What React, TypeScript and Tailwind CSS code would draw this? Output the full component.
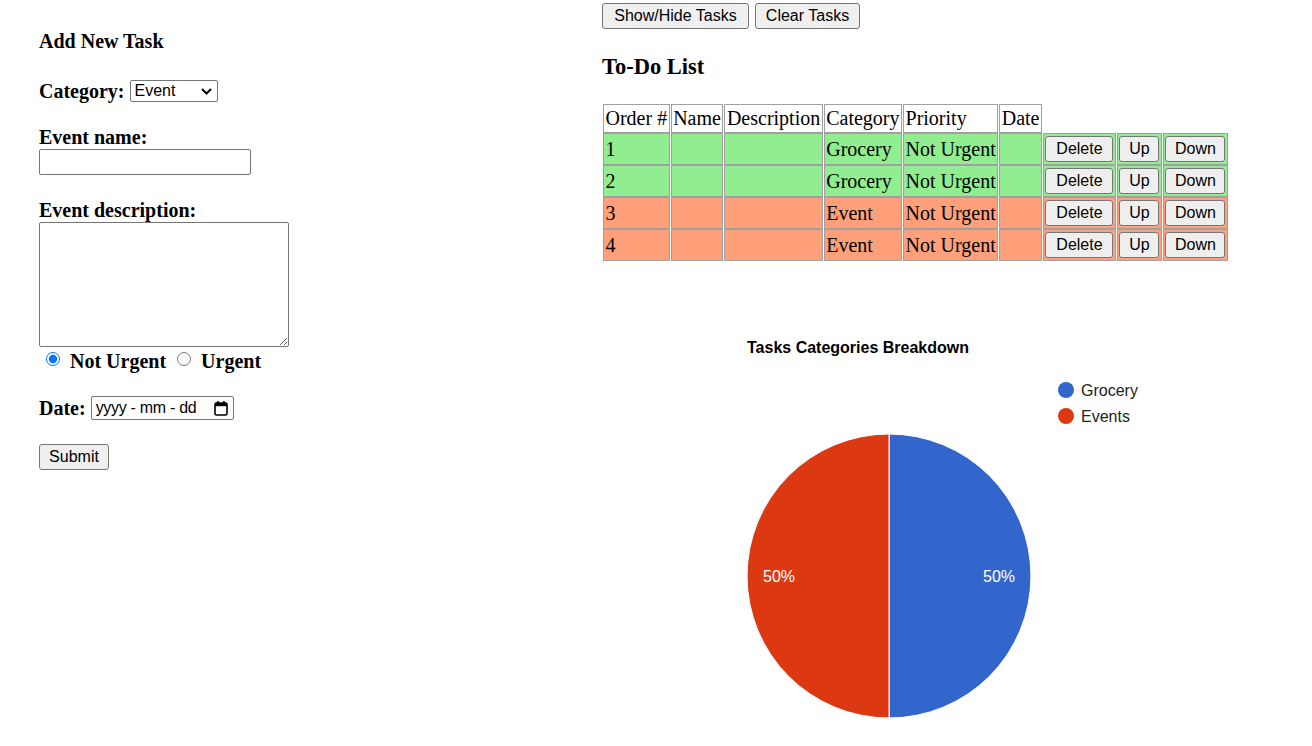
import React from 'react';

type Task = { id: number; category: 'Grocery' | 'Event'; priority: string };

const tasks: Task[] = [
  { id: 1, category: 'Grocery', priority: 'Not Urgent' },
  { id: 2, category: 'Grocery', priority: 'Not Urgent' },
  { id: 3, category: 'Event', priority: 'Not Urgent' },
  { id: 4, category: 'Event', priority: 'Not Urgent' },
];

const btn =
  "h-[26px] bg-[#efefef] border border-[#767676] rounded-[3px] text-[16px] leading-[18px] text-black font-['Liberation_Sans',Arial,sans-serif] text-center";

const cell = 'border border-[#a0a0a0] px-[1.5px] py-[2px] leading-[23px] align-middle';

const TaskForm: React.FC = () => (
  <div className="w-[602px] shrink-0 pl-[39px] pt-[30px]">
    <h4 className="font-bold leading-[23px]">Add New Task</h4>

    <div className="mt-[26px] flex items-center h-[24px] font-bold">
      <span>Category:</span>
      <span className="relative ml-[5px] inline-flex">
        <select
          defaultValue="Event"
          className="appearance-none w-[88px] h-[22px] border border-[#767676] rounded-[2px] pl-[4px] text-[16px] leading-[20px] font-normal font-['Liberation_Sans',Arial,sans-serif] bg-white"
        >
          <option>Grocery</option>
          <option>Event</option>
        </select>
        <svg className="absolute right-[6px] top-[8px] pointer-events-none" width="11" height="7" viewBox="0 0 11 7">
          <path d="M1 1l4.5 4.5L10 1" fill="none" stroke="#000" strokeWidth="2" />
        </svg>
      </span>
    </div>

    <div className="mt-[23px]">
      <div className="font-bold leading-[23px]">Event name:</div>
      <input type="text" className="block w-[212px] h-[26px] border border-[#767676] rounded-[2px] bg-white" />
    </div>

    <div className="mt-[24px]">
      <div className="font-bold leading-[23px]">Event description:</div>
      <textarea className="block w-[250px] h-[125px] border border-[#767676] rounded-[2px] bg-white" style={{ resize: 'both' }} />
    </div>

    <div className="mt-[2px] flex items-center h-[23px] font-bold">
      <input type="radio" name="priority" defaultChecked className="ml-[7px] mr-[10px] mb-[4px] w-[14px] h-[14px]" />
      <span>Not Urgent</span>
      <input type="radio" name="priority" className="ml-[11px] mr-[10px] mb-[4px] w-[14px] h-[14px]" />
      <span>Urgent</span>
    </div>

    <div className="mt-[24px] flex items-center h-[24px] font-bold">
      <span>Date:</span>
      <span className="ml-[5px] flex items-center w-[143px] h-[24px] border border-[#767676] rounded-[2px] pl-[4px] pr-[4px] font-normal text-[16px] font-['Liberation_Sans',Arial,sans-serif]">
        <span className="flex-1 tracking-[-0.3px]">yyyy - mm - dd</span>
        <svg width="14" height="16" viewBox="0 0 14 16" className="mr-[1px]">
          <rect x="1" y="3" width="12" height="12" rx="1.5" fill="none" stroke="#000" strokeWidth="1.6" />
          <rect x="1" y="3" width="12" height="3.2" fill="#000" />
          <rect x="3.2" y="1" width="1.6" height="3" fill="#000" />
          <rect x="9.2" y="1" width="1.6" height="3" fill="#000" />
        </svg>
      </span>
    </div>

    <button className={`${btn} mt-[24px] w-[70px] block`}>Submit</button>
  </div>
);

const CategoryChart: React.FC = () => (
  <svg width="640" height="426" viewBox="0 0 640 426" className="block mt-[58px]">
    <text x="145" y="33.5" fontFamily="Liberation Sans, Arial, sans-serif" fontSize="16" fontWeight="bold" fill="#000">
      Tasks Categories Breakdown
    </text>
    <circle cx="464" cy="71" r="8" fill="#3366cc" />
    <text x="479" y="76.5" fontFamily="Liberation Sans, Arial, sans-serif" fontSize="16" fill="#222">Grocery</text>
    <circle cx="464" cy="97" r="8" fill="#dc3912" />
    <text x="479" y="102.5" fontFamily="Liberation Sans, Arial, sans-serif" fontSize="16" fill="#222">Events</text>

    <path d="M287 115 A142 142 0 0 1 287 399 Z" fill="#3366cc" stroke="#fff" strokeWidth="1" />
    <path d="M287 399 A142 142 0 0 1 287 115 Z" fill="#dc3912" stroke="#fff" strokeWidth="1" />
    <text x="177" y="262.5" textAnchor="middle" fontFamily="Liberation Sans, Arial, sans-serif" fontSize="16" fill="#fff">50%</text>
    <text x="397" y="262.5" textAnchor="middle" fontFamily="Liberation Sans, Arial, sans-serif" fontSize="16" fill="#fff">50%</text>
  </svg>
);

const TodoList: React.FC = () => (
  <div className="flex-1 pt-[3px]">
    <div className="flex gap-[6px]">
      <button className={`${btn} w-[147px]`}>Show/Hide Tasks</button>
      <button className={`${btn} w-[105px]`}>Clear Tasks</button>
    </div>

    <h3 className="mt-[25px] text-[22.5px] font-bold leading-[26px]">To-Do List</h3>

    <table className="mt-[24px] border-separate border-spacing-x-px border-spacing-y-0 text-left">
      <thead>
        <tr className="bg-white">
          <th className={`${cell} font-normal`}>Order #</th>
          <th className={`${cell} font-normal`}>Name</th>
          <th className={`${cell} font-normal`}>Description</th>
          <th className={`${cell} font-normal`}>Category</th>
          <th className={`${cell} font-normal`}>Priority</th>
          <th className={`${cell} font-normal`}>Date</th>
        </tr>
      </thead>
      <tbody>
        {tasks.map((t) => {
          const bg = t.category === 'Grocery' ? 'bg-[#90ee90]' : 'bg-[#ffa07a]';
          return (
            <tr key={t.id}>
              <td className={`${cell} ${bg}`}>{t.id}</td>
              <td className={`${cell} ${bg}`}></td>
              <td className={`${cell} ${bg}`}></td>
              <td className={`${cell} ${bg}`}>{t.category}</td>
              <td className={`${cell} ${bg}`}>{t.priority}</td>
              <td className={`${cell} ${bg}`}></td>
              <td className={`${cell} ${bg}`}>
                <button className={`${btn} w-[68px] block`}>Delete</button>
              </td>
              <td className={`${cell} ${bg}`}>
                <button className={`${btn} w-[40px] block`}>Up</button>
              </td>
              <td className={`${cell} ${bg}`}>
                <button className={`${btn} w-[60px] block`}>Down</button>
              </td>
            </tr>
          );
        })}
      </tbody>
    </table>

    <CategoryChart />
  </div>
);

export default function App() {
  return (
    <div className="flex w-[1312px] h-[746px] overflow-hidden bg-white text-black text-[20px] font-['Liberation_Serif','Times_New_Roman',serif]">
      <TaskForm />
      <TodoList />
    </div>
  );
}
